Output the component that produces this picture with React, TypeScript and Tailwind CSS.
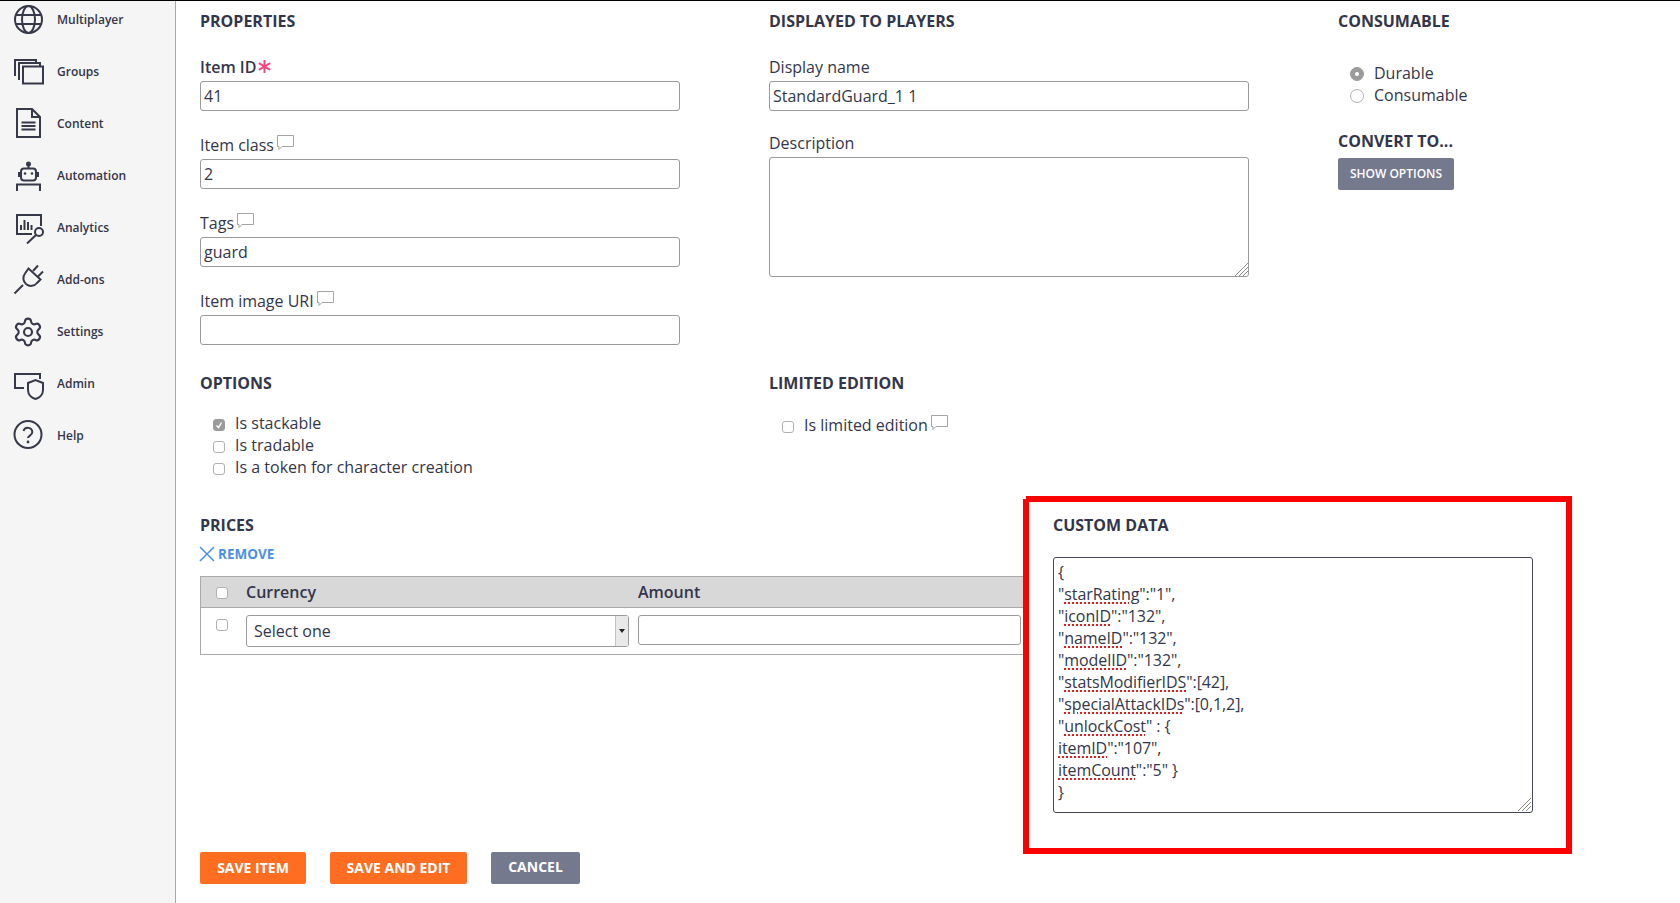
import React from "react";
import { Settings } from "lucide-react";

const iconColor = "#363949";

const Globe = () => (
    <svg width="32" height="32" viewBox="0 0 32 32" fill="none" stroke={iconColor} strokeWidth="2">
        <circle cx="16.5" cy="15.5" r="13.5" />
        <ellipse cx="16.5" cy="15.5" rx="6.5" ry="13.5" />
        <path d="M4 11h25M4 20h25" />
    </svg>
);

const Groups = () => (
    <svg width="32" height="32" viewBox="0 0 32 32" fill="none" stroke={iconColor} strokeWidth="2">
        <path d="M3 20V4h21v3" />
        <path d="M7 24V7h21v3" />
        <rect x="11" y="10.500" width="20" height="17" />
    </svg>
);

const Content = () => (
    <svg width="32" height="32" viewBox="0 0 32 32" fill="none" stroke={iconColor} strokeWidth="2">
        <path d="M5 1h15l8 8v20H5z" />
        <path d="M20 1v8h8" />
        <path d="M9.500 14.500h14M9.500 18h14M9.500 21.500h14" />
    </svg>
);

const Robot = () => (
    <svg width="32" height="32" viewBox="0 0 32 32" fill="none" stroke={iconColor} strokeWidth="2">
        <circle cx="16.500" cy="4" r="1.500" fill={iconColor} />
        <path d="M16.500 5v3" />
        <rect x="9" y="8.500" width="15" height="12" rx="3" />
        <path d="M7 12v5M26 12v5" />
        <circle cx="13" cy="13.500" r="1.300" fill={iconColor} stroke="none" />
        <circle cx="20" cy="13.500" r="1.300" fill={iconColor} stroke="none" />
        <path d="M5 31v-6.500h23V31" />
    </svg>
);

const Analytics = () => (
    <svg width="32" height="32" viewBox="0 0 32 32" fill="none" stroke={iconColor} strokeWidth="2">
        <path d="M29 14V3H5v19h15" />
        <path d="M9 18v-5M12.500 18V8M16 18v-8M19.500 18v-5" />
        <circle cx="27" cy="20" r="4" />
        <path d="M24 23l-9 8.500" />
    </svg>
);

const Plug = () => (
    <svg width="32" height="32" viewBox="0 0 32 32" fill="none" stroke={iconColor} strokeWidth="2">
        <path d="M2.500 29.500l8.500-8.500" />
        <path d="M16.500 4.500L28.500 15.500 25 19a7.500 7.500 0 0 1-12-9.500z" />
        <path d="M21 7l5-5.500M26 12.500l5-5" />
    </svg>
);

const Admin = () => (
    <svg width="32" height="32" viewBox="0 0 32 32" fill="none" stroke={iconColor} strokeWidth="2">
        <path d="M12 20H3V6h25v5" />
        <path d="M16 15l7.500-3 7.500 3v7c0 5-4 8-7.500 9-3.500-1-7.500-4-7.500-9z" />
    </svg>
);

const Help = () => (
    <svg width="32" height="32" viewBox="0 0 32 32" fill="none" stroke={iconColor} strokeWidth="2">
        <circle cx="16" cy="14.500" r="13.500" />
        <path d="M11.500 11a4.500 4.500 0 0 1 8.800 1.300c0 3-4.300 3.500-4.300 5.700" />
        <circle cx="16" cy="22" r="1.400" fill={iconColor} stroke="none" />
    </svg>
);

const navItems = [
    { label: "Multiplayer", icon: <Globe /> },
    { label: "Groups", icon: <Groups /> },
    { label: "Content", icon: <Content /> },
    { label: "Automation", icon: <Robot /> },
    { label: "Analytics", icon: <Analytics /> },
    { label: "Add-ons", icon: <Plug /> },
    { label: "Settings", icon: <Settings size={32} color={iconColor} strokeWidth={1.6} /> },
    { label: "Admin", icon: <Admin /> },
    { label: "Help", icon: <Help /> },
];

const Bubble = () => (
    <svg width="17" height="16" viewBox="0 0 17 16" fill="none" stroke="#a3a3a3" strokeWidth="1" className="ml-[3px] -mt-[5px] inline-block">
        <path d="M0.500 0.500h16v11H5l-3 3v-3H0.500z" />
    </svg>
);

const ResizeGrip = () => (
    <svg width="14" height="14" viewBox="0 0 14 14" stroke="#8a8a8a" strokeWidth="1" className="absolute right-[1px] bottom-[1px]">
        <path d="M1 14L14 1M5 14L14 5M9 14L14 9" />
    </svg>
);

const Heading = ({ children }: { children: React.ReactNode }) => (
    <h2 className="h-[40px] text-[16px] leading-[40px] font-bold uppercase">{children}</h2>
);

const Field = ({ label, value, hint, star }: { label: string; value: string; hint?: boolean; star?: boolean }) => (
    <div className="mb-[21px] w-[480px]">
        <div className="flex h-[24px] items-center pt-[2px] text-[16px] leading-[24px] mb-[3px]">
            <span className={star ? "font-semibold" : ""}>{label}</span>
            {star && (
                <svg width="13" height="13" viewBox="0 0 13 13" stroke="#f2487e" strokeWidth="2" className="ml-[2px] -mt-[2px]">
                    <path d="M6.500 0v13M0.800 3.200l11.400 6.600M12.200 3.200L0.800 9.800" />
                </svg>
            )}
            {hint && <Bubble />}
        </div>
        <input
            readOnly
            defaultValue={value}
            className="block h-[30px] w-full rounded-[3px] border border-[#9a9a9a] bg-white px-[3px] text-[16px] outline-none"
        />
    </div>
);

const Check = ({ checked, className }: { checked?: boolean; className?: string }) => (
    <span className={`flex h-[12px] w-[12px] items-center justify-center rounded-[3px] border ${checked ? "border-[#9b9b9b] bg-[#9b9b9b]" : "border-[#b0b0b0] bg-white"} ${className ?? ""}`}>
        {checked && (
            <svg width="8" height="8" viewBox="0 0 8 8" fill="none" stroke="white" strokeWidth="1.400">
                <path d="M1.500 4.500l2 2 3-5" />
            </svg>
        )}
    </span>
);

const CheckRow = ({ label, checked, hint }: { label: string; checked?: boolean; hint?: boolean }) => (
    <div className="flex h-[22px] items-center pl-[13px] text-[16px]">
        <Check checked={checked} className="mt-[3px] mr-[10px]" />
        <span>{label}</span>
        {hint && <Bubble />}
    </div>
);

const Radio = ({ label, checked }: { label: string; checked?: boolean }) => (
    <div className="flex h-[22px] items-center pl-[12px] text-[16px]">
        <span className={`mt-[2px] mr-[10px] flex h-[14px] w-[14px] items-center justify-center rounded-full border ${checked ? "border-[#9b9b9b] bg-[#9b9b9b]" : "border-[#b0b0b0] bg-white"}`}>
            {checked && <span className="h-[4px] w-[4px] rounded-full bg-white" />}
        </span>
        <span>{label}</span>
    </div>
);

const Sp = ({ children }: { children: React.ReactNode }) => (
    <span className="underline decoration-[#e11d1d] decoration-dotted decoration-2 underline-offset-2">{children}</span>
);

const App = () => {
    return (
        <div className="flex h-[903px] w-[1680px] overflow-hidden border-t border-black bg-white text-[#33364a]" style={{ fontFamily: '"Open Sans", sans-serif' }}>
            <aside className="w-[176px] shrink-0 border-r border-[#a9a9a9] bg-[#f5f5f5]">
                <nav className="-mt-[7px]">
                    {navItems.map((item) => (
                        <div key={item.label} className="flex h-[52px] items-center pl-[12px]">
                            <span className="w-[32px] shrink-0">{item.icon}</span>
                            <span className="ml-[13px] text-[12px] font-semibold">{item.label}</span>
                        </div>
                    ))}
                </nav>
            </aside>

            <main className="relative flex-1 pl-[24px]">
                <div className="grid grid-cols-[569px_569px_1fr]">
                    <section>
                        <Heading>Properties</Heading>
                        <div className="mt-[13px]">
                            <Field label="Item ID" value="41" star />
                            <Field label="Item class" value="2" hint />
                            <Field label="Tags" value="guard" hint />
                            <Field label="Item image URI" value="" hint />
                        </div>
                    </section>
                    <section>
                        <Heading>Displayed to players</Heading>
                        <div className="mt-[13px]">
                            <Field label="Display name" value="StandardGuard_1 1" />
                            <div className="-mt-[1px] h-[24px] text-[16px] leading-[24px] mb-[2px]">Description</div>
                            <div className="relative h-[120px] w-[480px]">
                                <textarea readOnly className="block h-full w-full resize-none rounded-[3px] border border-[#9a9a9a] bg-white outline-none" />
                                <ResizeGrip />
                            </div>
                        </div>
                    </section>
                    <section>
                        <Heading>Consumable</Heading>
                        <div className="mt-[21px]">
                            <Radio label="Durable" checked />
                            <Radio label="Consumable" />
                        </div>
                        <div className="mt-[24px]">
                            <h2 className="h-[20px] text-[16px] leading-[22px] font-bold uppercase">Convert to...</h2>
                            <button className="mt-[8px] h-[32px] w-[116px] rounded-[2px] bg-[#74798e] text-[12px] font-semibold text-white">SHOW OPTIONS</button>
                        </div>
                    </section>
                </div>

                <div className="-mt-[3px] grid grid-cols-[569px_569px_1fr]">
                    <section>
                        <Heading>Options</Heading>
                        <div className="mt-[9px]">
                            <CheckRow label="Is stackable" checked />
                            <CheckRow label="Is tradable" />
                            <CheckRow label="Is a token for character creation" />
                        </div>
                    </section>
                    <section>
                        <Heading>Limited edition</Heading>
                        <div className="mt-[11px]">
                            <CheckRow label="Is limited edition" hint />
                        </div>
                    </section>
                </div>

                <section className="mt-[27px]">
                    <Heading>Prices</Heading>
                    <div className="-mt-[2px] -ml-[1px] flex h-[22px] items-center text-[13.5px] font-bold text-[#4a90e2]">
                        <svg width="16" height="16" viewBox="0 0 16 16" fill="none" stroke="#4a90e2" strokeWidth="1.500" className="mr-[3px]">
                            <path d="M1 1l14 14M15 1L1 15" />
                        </svg>
                        REMOVE
                    </div>
                    <div className="mt-[11px] w-[830px] border border-[#a9a9a9]">
                        <div className="flex h-[31px] items-center border-b border-[#a9a9a9] bg-[#d8d8d8] text-[16px] font-semibold">
                            <Check className="mt-[2px] ml-[15px]" />
                            <span className="ml-[18px] w-[392px]">Currency</span>
                            <span>Amount</span>
                        </div>
                        <div className="flex h-[46px] items-start pt-[7px]">
                            <Check className="mt-[4px] ml-[15px]" />
                            <div className="ml-[18px] flex h-[32px] w-[383px] items-center justify-between rounded-[3px] border border-[#9a9a9a] pl-[7px] text-[16px]">
                                <span>Select one</span>
                                <span className="flex h-full w-[13px] items-center justify-center border-l border-[#c4c4c4] bg-[#e9e9e9]">
                                    <span className="h-0 w-0 border-x-[3px] border-t-[4px] border-x-transparent border-t-[#222]" />
                                </span>
                            </div>
                            <div className="ml-[9px] h-[30px] w-[383px] rounded-[3px] border border-[#9a9a9a]" />
                        </div>
                    </div>
                </section>

                <div className="absolute top-[851px] left-[24px] flex gap-[24px] text-[14px] font-bold text-white">
                    <button className="h-[32px] w-[106px] rounded-[2px] bg-[#ff6d21] pb-[2px]">SAVE ITEM</button>
                    <button className="h-[32px] w-[137px] rounded-[2px] bg-[#ff6d21] pb-[2px]">SAVE AND EDIT</button>
                    <button className="h-[32px] w-[89px] rounded-[2px] bg-[#74798e] pb-[3px]">CANCEL</button>
                </div>

                {/* red annotation frame sits on top of the prices table */}
                <div className="absolute top-[495px] left-[847px] h-[358px] w-[549px] border-[6px] border-[#ff0000] bg-white pt-[3px] pl-[24px]">
                    <span className="absolute -top-[6px] -left-[6px] h-[3px] w-[3px] bg-white" />
                    <Heading>Custom data</Heading>
                    <div className="relative mt-[12px] h-[256px] w-[480px] rounded-[3px] border border-[#44475a] px-[4px] pt-[3px] text-[16px] leading-[22px] tracking-[-0.08px]">
                        <div>{"{"}</div>
                        <div>"<Sp>starRating</Sp>":"1",</div>
                        <div>"<Sp>iconID</Sp>":"132",</div>
                        <div>"<Sp>nameID</Sp>":"132",</div>
                        <div>"<Sp>modelID</Sp>":"132",</div>
                        <div>"<Sp>statsModifierIDS</Sp>":[42],</div>
                        <div>"<Sp>specialAttackIDs</Sp>":[0,1,2],</div>
                        <div>"<Sp>unlockCost</Sp>" : {"{"}</div>
                        <div><Sp>itemID</Sp>":"107",</div>
                        <div><Sp>itemCount</Sp>":"5" {"}"}</div>
                        <div>{"}"}</div>
                        <ResizeGrip />
                    </div>
                </div>
            </main>
        </div>
    );
};

export default App;
